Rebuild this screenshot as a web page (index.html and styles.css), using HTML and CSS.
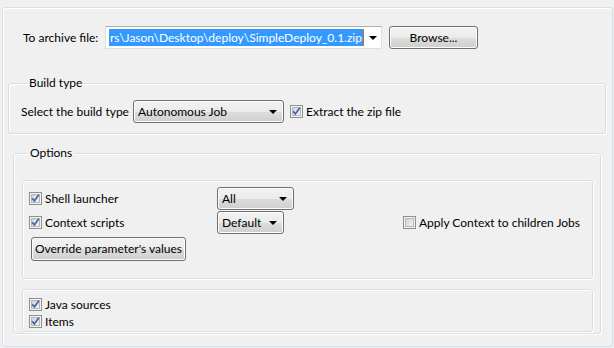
FILE: index.html
```html
<!DOCTYPE html>
<html lang="en">
<head>
    <meta charset="UTF-8">
    <title>Build Job</title>
    <link rel="stylesheet" href="styles.css">
</head>
<body>
    <!-- shared checkbox glyphs -->
    <svg class="defs" width="0" height="0">
        <defs>
            <linearGradient id="chk-fill" x1="0" y1="0" x2="1" y2="1">
                <stop offset="0" stop-color="#cbcfd5"/>
                <stop offset="1" stop-color="#f7f7f7"/>
            </linearGradient>
            <symbol id="box" viewBox="0 0 13 13">
                <rect x="0.5" y="0.5" width="12" height="12" fill="#f4f4f4" stroke="#8e8f8f"/>
                <rect x="2.5" y="2.5" width="8" height="8" fill="url(#chk-fill)" stroke="#b2b6bd"/>
            </symbol>
            <symbol id="tick" viewBox="0 0 13 13">
                <use href="#box"/>
                <path d="M3.2 6.4 L5.4 8.9 L9.8 2.8" fill="none" stroke="#4a61a0" stroke-width="1.7"/>
            </symbol>
        </defs>
    </svg>

    <div class="panel">
        <!-- Archive target -->
        <div class="archive-row">
            <span class="archive-label">To archive file:</span>
            <div class="combo-edit">
                <span class="sel-text">rs\Jason\Desktop\deploy\SimpleDeploy_0.1.zip</span><span class="caret"></span>
                <span class="arrow"></span>
            </div>
            <button class="btn browse">Browse...</button>
        </div>

        <!-- Build type -->
        <fieldset class="group build">
            <legend>Build type</legend>
            <div class="build-row">
                <span class="build-label">Select the build type</span>
                <div class="combo build-combo"><span>Autonomous Job</span><span class="arrow"></span></div>
                <label class="check"><svg class="cb"><use href="#tick"/></svg>Extract the zip file</label>
            </div>
        </fieldset>

        <!-- Options -->
        <fieldset class="group options">
            <legend>Options</legend>
            <div class="box launch-grid">
                <label class="check"><svg class="cb"><use href="#tick"/></svg>Shell launcher</label>
                <div class="combo all-combo"><span>All</span><span class="arrow"></span></div>
                <span></span>

                <label class="check"><svg class="cb"><use href="#tick"/></svg>Context scripts</label>
                <div class="combo default-combo"><span>Default</span><span class="arrow"></span></div>
                <label class="check"><svg class="cb"><use href="#box"/></svg>Apply Context to children Jobs</label>

                <button class="btn override">Override parameter's values</button>
            </div>
            <div class="box sources">
                <label class="check"><svg class="cb"><use href="#tick"/></svg>Java sources</label>
                <label class="check"><svg class="cb"><use href="#tick"/></svg>Items</label>
            </div>
        </fieldset>
    </div>
</body>
</html>
```

FILE: styles.css
```css
/* General Styles */
* {
    margin: 0;
    padding: 0;
    box-sizing: border-box;
}
body {
    font-family: "Lato", "Open Sans", sans-serif;
    font-size: 12px;
    color: #000;
    background: #f0f0f0;
}
.defs {
    position: absolute;
}

.panel {
    margin: 7px 1px 0 2px;
    height: 340px;
    padding: 18px 0 0 5px;
    border: 1px solid #d5dfe5;
    border-radius: 3px;
    box-shadow: inset 1px 1px 0 #fff;
}

/* Archive row */
.archive-row {
    display: flex;
    align-items: center;
    height: 23px;
    margin-left: 14px;
}
.archive-label {
    width: 83px;
    padding-left: 1px;
}
.combo-edit {
    position: relative;
    display: flex;
    align-items: center;
    width: 277px;
    height: 23px;
    padding-left: 3px;
    background: #fff;
    border: 1px solid #dbe1e8;
    border-top-color: #abadb3;
}
.sel-text {
    background: #3399ff;
    color: #fff;
    line-height: 17px;
    padding: 0 1px;
    white-space: nowrap;
}
.caret {
    width: 1px;
    height: 17px;
    background: #cc6a2a;
}
.combo-edit .arrow {
    position: absolute;
    right: 4px;
    top: 9px;
}

.arrow {
    width: 0;
    height: 0;
    border-left: 4px solid transparent;
    border-right: 4px solid transparent;
    border-top: 4px solid #000;
}

/* Buttons and read-only combos */
.btn,
.combo {
    font: inherit;
    color: #000;
    height: 23px;
    border: 1px solid #707070;
    border-radius: 3px;
    background: linear-gradient(#f2f2f2 0%, #ebebeb 50%, #dddddd 51%, #cfcfcf 100%);
    box-shadow: inset 0 0 0 1px #fcfcfc;
}
.browse {
    width: 89px;
    margin-left: 7px;
}
.combo {
    display: flex;
    align-items: center;
    justify-content: space-between;
    padding: 0 6px 0 4px;
}

/* Group boxes */
.group {
    border: 1px solid #d5dfe5;
    border-radius: 3px;
    box-shadow: inset 1px 1px 0 #fff, 1px 1px 0 #fff;
    min-inline-size: 0;
}
.group legend {
    line-height: 16px;
    padding: 0 2px;
    margin-left: 6px;
}
.build {
    margin: 26px 6px 0 0;
    padding: 9px 12px 10px;
}
.build-row {
    display: flex;
    align-items: center;
    height: 23px;
}
.build-label {
    width: 112px;
}
.build-combo {
    width: 151px;
    margin-right: 6px;
}

.options {
    margin: 11px 11px 0 5px;
    padding: 19px 7px 1px 8px;
}
.box {
    border: 1px solid #d5dfe5;
    border-radius: 3px;
    box-shadow: inset 1px 1px 0 #fff, 1px 1px 0 #fff;
}
.launch-grid {
    display: grid;
    grid-template-columns: 188px 186px 1fr;
    grid-template-rows: 23px 23px 24px;
    row-gap: 1px;
    align-items: center;
    height: 99px;
    padding: 6px 6px 0;
}
.all-combo {
    width: 77px;
}
.default-combo {
    width: 67px;
}
.override {
    justify-self: start;
    width: 155px;
    height: 24px;
    margin: 3px 0 0 2px;
}
.sources {
    height: 43px;
    margin-top: 10px;
    padding: 6px 6px 0;
}
.sources .check {
    height: 17px;
}

/* Checkboxes */
.check {
    display: flex;
    align-items: center;
    white-space: nowrap;
}
.cb {
    width: 13px;
    height: 13px;
    margin-right: 3px;
    flex: none;
}
```
